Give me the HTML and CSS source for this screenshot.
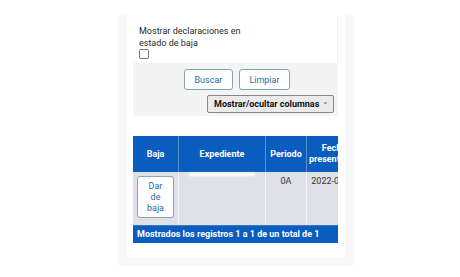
FILE: index.html
```html
<!DOCTYPE html>
<html lang="es">
  <head>
    <meta charset="UTF-8" />
    <title>Declaraciones</title>
    <link rel="stylesheet" href="styles.css">
  </head>
  <body>
    <div class="panel">
      <div class="card">
        <!-- filtro -->
        <div class="filtro">
          <label class="chk-label" for="verBaja">Mostrar declaraciones en estado de baja</label>
          <input type="checkbox" id="verBaja" class="chk" />
        </div>
        <div class="acciones">
          <div class="botones">
            <button class="btn">Buscar</button>
            <button class="btn">Limpiar</button>
          </div>
          <div class="select-row">
            <div class="sel">Mostrar/ocultar columnas <span class="caret">&#8964;</span></div>
          </div>
        </div>
        <!-- tabla -->
        <div class="tabla-wrap">
          <table class="tabla">
            <thead>
              <tr>
                <th class="c-baja">Baja</th>
                <th class="c-exp">Expediente</th>
                <th class="c-per">Periodo</th>
                <th class="c-fec">Fecha presentaci&oacute;n</th>
              </tr>
            </thead>
            <tbody>
              <tr>
                <td class="c-baja"><button class="btn-baja">Dar de baja</button></td>
                <td class="c-exp"><span class="oculto"></span></td>
                <td class="c-per">0A</td>
                <td class="c-fec">2022-07-15</td>
              </tr>
            </tbody>
          </table>
          <div class="pie">Mostrados los registros 1 a 1 de un total de 1</div>
        </div>
      </div>
    </div>
  </body>
</html>
```

FILE: styles.css
```css
body {
  margin: 0;
  padding: 0;
  background: #fff;
  font-family: Roboto, "Liberation Sans", sans-serif;
  color: #333;
}
.panel {
  width: 236px;
  margin: 15px 0 0 118px;
  padding: 0 9px 8px 9px;
  box-sizing: border-box;
  background: #f8f8f8;
}
.card {
  background: #fff;
  padding: 0 7px 15px 6px;
}
.filtro {
  padding: 10px 6px 4px;
  border-right: 1px solid #f0f0f0;
}
.chk-label {
  display: block;
  width: 104px;
  font-size: 9px;
  line-height: 12px;
  color: #2a2a2a;
}
.chk {
  display: block;
  margin: 0;
  width: 10px;
  height: 10px;
  appearance: none;
  border: 1px solid #777;
  border-radius: 2px;
  background: #fff;
}
.acciones {
  background: #f4f4f4;
  padding: 6px 4px 3px;
}
.botones {
  display: flex;
  justify-content: center;
  gap: 6px;
  padding-left: 3px;
}
.btn {
  font-family: Roboto, "Liberation Sans", sans-serif;
  font-size: 9px;
  color: #2c6aa8;
  background: #fff;
  border: 1px solid #7fa7b3;
  border-radius: 3px;
  height: 21px;
  padding: 0 9.5px;
}
.select-row {
  display: flex;
  justify-content: flex-end;
  margin-top: 5px;
}
.sel {
  display: flex;
  align-items: center;
  justify-content: space-between;
  width: 127px;
  height: 18px;
  box-sizing: border-box;
  padding: 0 4px 0 6px;
  background: #ebebeb;
  border: 1px solid #888;
  border-radius: 2px;
  font-size: 9px;
  font-weight: bold;
  color: #111;
}
.caret {
  font-size: 8px;
  color: #666;
  font-weight: normal;
  line-height: 8px;
  margin-top: -4px;
}
.tabla-wrap {
  margin-top: 20px;
  overflow: hidden;
  width: 205px;
}
.tabla {
  border-collapse: collapse;
  table-layout: fixed;
  width: 226px;
  font-size: 9px;
}
.tabla th {
  background: #0a5cbf;
  color: #fff;
  font-weight: bold;
  height: 36px;
  padding: 0 2px;
  border-right: 1px solid #5a8fd0;
  line-height: 11px;
}
.tabla td {
  background: #dfe1e8;
  height: 49px;
  vertical-align: top;
  padding: 4px 2px 0;
  text-align: center;
  color: #333;
  border-right: 1px solid #f3f4f7;
}
.c-baja { width: 41px; }
.c-exp { width: 82px; }
.c-per { width: 36px; }
.c-fec { width: 50px; }
.tabla td.c-baja {
  padding: 4px 4px 0;
}
.btn-baja {
  width: 37px;
  height: 42px;
  padding: 0 9px;
  background: #fff;
  border: 1px solid #8aa5b7;
  border-radius: 3px;
  font-family: Roboto, "Liberation Sans", sans-serif;
  font-size: 9px;
  line-height: 11px;
  color: #2c6aa8;
}
.oculto {
  display: block;
  height: 3px;
  margin: -3px 8px 0;
  background: #fff;
  filter: blur(1px);
}
.pie {
  background: #0a5cbf;
  color: #fff;
  font-size: 9px;
  font-weight: bold;
  height: 17px;
  line-height: 17px;
  padding-left: 4px;
  border-top: 1px solid #3a78c8;
  white-space: nowrap;
}
```
